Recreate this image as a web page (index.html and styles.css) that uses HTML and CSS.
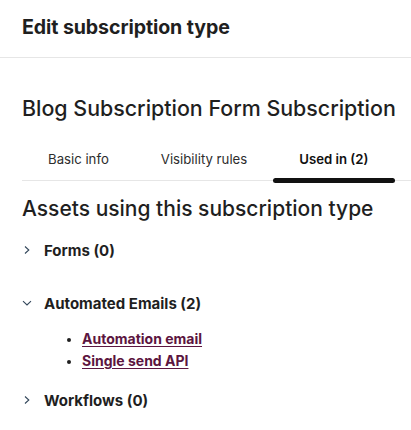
FILE: index.html
```html
<!DOCTYPE html>
<html lang="en">
<head>
<meta charset="utf-8">
<title>Edit subscription type</title>
<link rel="stylesheet" href="styles.css">
</head>
<body>
<header class="panel-header">
  <h1 class="panel-title">Edit subscription type</h1>
</header>
<main class="panel-body">
  <h2 class="sub-name">Blog Subscription Form Subscription</h2>
  <nav class="tabs">
    <span class="tab">Basic info</span>
    <span class="tab">Visibility rules</span>
    <span class="tab active">Used in (2)</span>
  </nav>
  <h3 class="section-title">Assets using this subscription type</h3>
  <div class="group">
    <div class="group-head">
      <svg class="chev" viewBox="0 0 10 10" width="10" height="10"><path d="M3 1.5 L6.8 5 L3 8.5" fill="none" stroke="#33475b" stroke-width="1.1"/></svg>
      <span class="group-label">Forms (0)</span>
    </div>
  </div>
  <div class="group open">
    <div class="group-head">
      <svg class="chev" viewBox="0 0 10 10" width="10" height="10"><path d="M1 3.2 L5 7 L9 3.2" fill="none" stroke="#33475b" stroke-width="1.1"/></svg>
      <span class="group-label">Automated Emails (2)</span>
    </div>
    <ul class="asset-list">
      <li><a href="#">Automation email</a></li>
      <li><a href="#">Single send API</a></li>
    </ul>
  </div>
  <div class="group">
    <div class="group-head">
      <svg class="chev" viewBox="0 0 10 10" width="10" height="10"><path d="M3 1.5 L6.8 5 L3 8.5" fill="none" stroke="#33475b" stroke-width="1.1"/></svg>
      <span class="group-label">Workflows (0)</span>
    </div>
  </div>
</main>
</body>
</html>
```
FILE: styles.css
```css
* { box-sizing: border-box; }
html, body { margin: 0; padding: 0; background: #fff; }
body {
  font-family: Inter, "Noto Sans", sans-serif;
  color: #1f1f1f;
  width: 411px;
  overflow: hidden;
}
.panel-header {
  height: 58px;
  padding: 0 22px;
  display: flex;
  align-items: center;
  border-bottom: 1px solid #e6e6e6;
}
.panel-title {
  margin: 0 0 3px;
  font-size: 19.6px;
  font-weight: 700;
  letter-spacing: -0.1px;
}
.panel-body {
  padding: 36px 0 0 22px;
}
.sub-name {
  margin: 0;
  font-size: 21.4px;
  font-weight: 500;
  line-height: 28px;
}
.tabs {
  margin-top: 27px;
  display: flex;
  border-bottom: 1px solid #e6e6e6;
  height: 32px;
}
.tab {
  font-size: 13.2px;
  color: #2d2d2d;
  line-height: 20px;
  padding: 0 26px 0 26px;
  position: relative;
}
.tab.active {
  font-weight: 600;
  color: #111;
  padding-right: 27px;
}
.tab.active::after {
  content: "";
  position: absolute;
  left: 0; right: 0;
  bottom: -3px;
  height: 5px;
  background: #111;
  border-radius: 3px;
}
.section-title {
  margin: 14px 0 0;
  font-size: 21px;
  font-weight: 500;
  line-height: 28px;
}
.group-head {
  display: flex;
  align-items: center;
  height: 22px;
}
.group { margin-top: 16px; }
.group + .group { margin-top: 31px; }
.group.open + .group { margin-top: 17px; }
.chev { flex: none; margin-right: 12px; }
.group-label {
  font-size: 15px;
  font-weight: 700;
}
.asset-list {
  margin: 14px 0 0;
  padding-left: 60px;
  list-style: disc;
}
.asset-list li {
  font-size: 14px;
  line-height: 22px;
}
.asset-list li::marker { font-size: 12px; }
.asset-list a {
  color: #5c1540;
  font-weight: 700;
  text-decoration: underline;
  text-underline-offset: 2px;
}
```
